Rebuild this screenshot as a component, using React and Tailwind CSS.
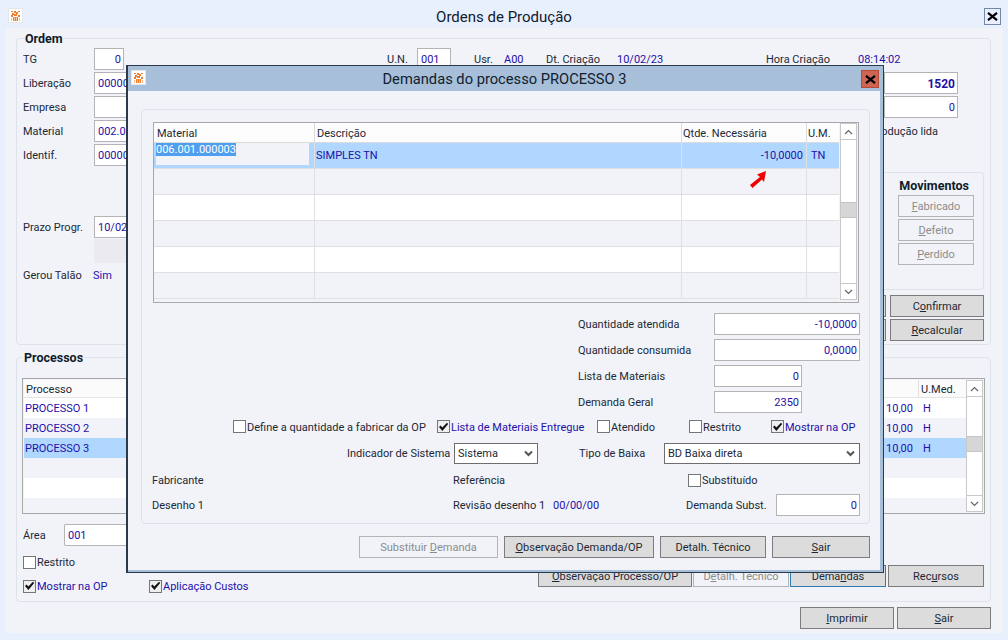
const blue = "text-[#1f10a8]";

function Logo() {
  return (
    <div className="w-[15px] h-[15px] bg-white border border-[#e6e6e6] flex items-center justify-center shrink-0">
      <svg width="9" height="10" viewBox="0 0 9 10">
        <path d="M0 0h2v1H0zM3 0h2v2H3zM7 0h2v1H7zM1 2h2v2H1zM5 1h2v2H5zM3 3h3v2H3zM0 4h2v2H0zM7 4h2v2H7zM2 6h1v4H2zM4 6h1v4H4zM6 6h1v4H6z" fill="#f47a2c" />
        <path d="M0 7h1v3H0zM8 7h1v3H8zM3 6h1v4H3zM5 6h1v4H5z" fill="#fab98a" />
      </svg>
    </div>
  );
}

function CloseX() {
  return (
    <svg width="11" height="9" viewBox="0 0 11 9">
      <path d="M1 0.8 L10 8.2 M10 0.8 L1 8.2" stroke="#000" strokeWidth="2.2" fill="none" />
    </svg>
  );
}

function Field({ children, className = "", color = blue }) {
  return (
    <div className={`h-[22px] bg-white border border-[#b4b4b4] pl-[3px] pr-[2px] flex items-center shrink-0 overflow-hidden whitespace-nowrap ${color} ${className}`}>
      <span>{children}</span>
    </div>
  );
}

function Btn({ children, className = "", disabled, active }) {
  let look = "bg-[#dcdcdc] border-[#7c7c7c] text-[#1c2836]";
  if (disabled) look = "bg-[#f1f3f9] border-[#b4b4b4] text-[#8c8c8c]";
  if (active) look = "bg-[#dcdcdc] border-[#2c7db5] text-[#1c2836]";
  return (
    <div className={`h-[22px] border flex items-center justify-center shrink-0 whitespace-nowrap ${look} ${className}`}>
      <span>{children}</span>
    </div>
  );
}

function Check({ label, checked, className = "", color = "text-[#1c2836]" }) {
  return (
    <div className={`flex items-center gap-[1px] shrink-0 whitespace-nowrap ${color} ${className}`}>
      <div className={`w-[13px] h-[13px] shrink-0 border border-[#767676] flex items-center justify-center ${checked ? "bg-[#efefef]" : "bg-white"}`}>
        {checked && (
          <svg width="11" height="10" viewBox="0 0 11 10">
            <path d="M1 5 L2.6 3.6 L4.3 5.6 L9 0.8 L10.2 2 L4.4 9 Z" fill="#111" />
          </svg>
        )}
      </div>
      <span>{label}</span>
    </div>
  );
}

function Select({ value, className = "" }) {
  return (
    <div className={`h-[21px] bg-white border border-[#6e6e6e] pl-[3px] pr-[4px] flex items-center justify-between shrink-0 text-[#1c2836] ${className}`}>
      <span>{value}</span>
      <svg width="9" height="7" viewBox="0 0 9 7">
        <path d="M1 1.5 L4.5 5 L8 1.5" stroke="#555" strokeWidth="2" fill="none" />
      </svg>
    </div>
  );
}

function Scrollbar({ className = "", thumbClass = "" }) {
  return (
    <div className={`w-[17px] shrink-0 bg-white border border-[#c8c8c8] flex flex-col justify-between relative ${className}`}>
      <div className="h-[16px] border-b border-[#c8c8c8] flex items-center justify-center">
        <svg width="9" height="6" viewBox="0 0 9 6"><path d="M1 5 L4.5 1.5 L8 5" stroke="#666" strokeWidth="1.2" fill="none" /></svg>
      </div>
      <div className={`absolute left-0 w-full h-[16px] bg-[#d6d6d6] border-y border-[#c4c4c4] ${thumbClass}`} />
      <div className="h-[16px] border-t border-[#c8c8c8] flex items-center justify-center">
        <svg width="9" height="6" viewBox="0 0 9 6"><path d="M1 1 L4.5 4.5 L8 1" stroke="#666" strokeWidth="1.2" fill="none" /></svg>
      </div>
    </div>
  );
}

function Group({ title, className = "", children, titleClass = "left-[7px]" }) {
  return (
    <div className={`relative border border-[#dde3ea] rounded-[4px] ${className}`}>
      {title && <div className={`absolute -top-[7px] bg-[#f1f3f9] px-[1px] font-bold text-[12.5px] text-[#0f1b2a] leading-[14px] ${titleClass}`}>{title}</div>}
      {children}
    </div>
  );
}

// campos da esquerda ficam cortados pelo modal
function LeftRow({ label, value, className = "" }) {
  return (
    <div className={`h-[24px] flex items-center ${className}`}>
      <span className="w-[71px] shrink-0">{label}</span>
      <Field className="w-[32px] border-r-0 pr-0">{value}</Field>
    </div>
  );
}

const demandRows = [0, 1, 2, 3, 4, 5];
const procRows = [
  { name: "PROCESSO 1", bg: "bg-white", h: "h-[20px]", hours: "10,00", um: "H" },
  { name: "PROCESSO 2", bg: "bg-[#f1f3f9]", h: "h-[20px]", hours: "10,00", um: "H" },
  { name: "PROCESSO 3", bg: "bg-[#b0d7ff]", h: "h-[20px]", hours: "10,00", um: "H" },
  { name: "", bg: "bg-[#f1f3f9]", h: "h-[20px]" },
  { name: "", bg: "bg-white", h: "h-[20px]" },
  { name: "", bg: "bg-[#f1f3f9]", h: "h-[14px]" },
];

function DemandasModal() {
  return (
    <div className="absolute left-[126px] top-[65px] w-[758px] h-[508px] border border-[#2b3a4a] border-l-2 bg-[#f1f3f9] flex flex-col">
      <div className="h-[25px] shrink-0 bg-[#a7bfd9] relative flex items-center justify-center text-[14.7px] text-[#10202f]">
        <div className="absolute left-[3px] top-[4px]"><Logo /></div>
        <div className="-ml-[2px] mt-[1px]">Demandas do processo PROCESSO 3</div>
        <div className="absolute right-[4px] top-[4px] w-[18px] h-[18px] bg-[#cd6552] border border-[#b5493a] flex items-center justify-center">
          <CloseX />
        </div>
      </div>
      <div className="flex-1 border-r-[3px] border-b-[2px] border-[#a7bfd9] pl-[13px] pr-[10px] pt-[18px]">
        <Group className="h-[415px] pl-[11px] pt-[12px]">
          <div className="w-[706px] h-[181px] border border-[#a8a8a8] bg-[#f1f3f9] flex overflow-hidden">
            <div className="w-[685px] shrink-0">
              <div className="h-[20px] flex bg-[#fdfdfd] border-b border-[#dcdcdc] text-[#1c2836]">
                <div className="w-[161px] pl-[3px] border-r border-[#dcdcdc] flex items-center"><span>Material</span></div>
                <div className="w-[367px] pl-[2px] border-r border-[#dcdcdc] flex items-center"><span>Descrição</span></div>
                <div className="w-[125px] pl-[1px] border-r border-[#dcdcdc] flex items-center"><span>Qtde. Necessária</span></div>
                <div className="w-[32px] pl-[1px] flex items-center"><span>U.M.</span></div>
              </div>
              {demandRows.map((i) => (
                <div key={i} className={`h-[26px] flex border-b border-[#e0e0e0] ${i === 0 ? "bg-[#b0d7ff]" : i % 2 === 1 ? "bg-[#f1f3f9]" : "bg-white"}`}>
                  <div className="w-[161px] border-r border-[#e0e0e0] pl-[2px]">
                    {i === 0 && (
                      <div className="w-[153px] h-[22px] bg-[#f1f3f9]">
                        <div className="w-fit bg-[#4f9ff0] text-white leading-[13px]">006.001.000003</div>
                      </div>
                    )}
                  </div>
                  <div className={`w-[367px] border-r border-[#e0e0e0] pl-[1px] flex items-center ${blue}`}>{i === 0 && "SIMPLES TN"}</div>
                  <div className={`w-[125px] border-r border-[#e0e0e0] pr-[3px] flex items-center justify-end ${blue}`}>{i === 0 && "-10,0000"}</div>
                  <div className={`w-[32px] pl-[4px] flex items-center ${blue}`}>{i === 0 && "TN"}</div>
                </div>
              ))}
            </div>
            <Scrollbar className="ml-[1px] mb-[2px]" thumbClass="top-[78px]" />
          </div>

          <div className="mt-[10px] flex flex-col gap-[4px]">
            <div className="flex items-center">
              <span className="ml-[425px] w-[136px]">Quantidade atendida</span>
              <Field className="w-[146px] justify-end">-10,0000</Field>
            </div>
            <div className="flex items-center">
              <span className="ml-[425px] w-[136px]">Quantidade consumida</span>
              <Field className="w-[146px] justify-end">0,0000</Field>
            </div>
            <div className="flex items-center">
              <span className="ml-[425px] w-[136px]">Lista de Materiais</span>
              <Field className="w-[88px] justify-end">0</Field>
            </div>
            <div className="flex items-center">
              <span className="ml-[425px] w-[136px]">Demanda Geral</span>
              <Field className="w-[88px] justify-end">2350</Field>
            </div>
          </div>

          <div className="h-[27px] flex items-center">
            <Check className="ml-[80px] w-[204px]" label="Define a quantidade a fabricar da OP" />
            <Check className="w-[160px]" checked color={blue} label="Lista de Materiais Entregue" />
            <Check className="w-[92px]" label="Atendido" />
            <Check className="w-[82px]" label="Restrito" />
            <Check checked color={blue} label="Mostrar na OP" />
          </div>

          <div className="h-[26px] flex items-center">
            <span className="ml-[194px] w-[107px] whitespace-nowrap">Indicador de Sistema</span>
            <Select className="w-[84px]" value="Sistema" />
            <span className="ml-[41px] w-[85px]">Tipo de Baixa</span>
            <Select className="w-[196px]" value="BD Baixa direta" />
          </div>

          <div className="h-[28px] flex items-center">
            <span className="-ml-[1px] w-[301px]">Fabricante</span>
            <span className="w-[235px]">Referência</span>
            <Check label="Substituído" />
          </div>

          <div className="h-[22px] flex items-center">
            <span className="-ml-[1px] w-[301px]">Desenho 1</span>
            <span className="w-[100px] whitespace-nowrap">Revisão desenho 1</span>
            <span className={`w-[133px] ${blue}`}>00/00/00</span>
            <span className="w-[90px] whitespace-nowrap">Demanda Subst.</span>
            <Field className="w-[84px] justify-end">0</Field>
          </div>
        </Group>

        <div className="mt-[12px] flex justify-end gap-[6px]">
          <Btn disabled className="w-[139px]">Substituir <u>D</u>emanda</Btn>
          <Btn className="w-[150px]"><u>O</u>bservação Demanda/OP</Btn>
          <Btn className="w-[106px]">Detalh. Técnico</Btn>
          <Btn className="w-[98px]"><u>S</u>air</Btn>
        </div>
      </div>
    </div>
  );
}

export default function App() {
  return (
    <div className="relative w-[1008px] h-[640px] overflow-hidden bg-[#e8effd] text-[11px] text-[#1c2836] font-['Roboto',sans-serif] leading-[14px] [&_span]:pt-[2px]">
      <div className="h-[28px] relative flex items-center justify-center text-[15px] text-[#10202f]">
        <div className="absolute left-[8px] top-[8px]"><Logo /></div>
        <div className="pt-[6px]">Ordens de Produção</div>
        <div className="absolute left-[984px] top-[8px] w-[17px] h-[17px] border border-[#7487a8] flex items-center justify-center">
          <CloseX />
        </div>
      </div>

      <div className="ml-[6px] mr-[5px] h-[605px] bg-[#f1f3f9] pl-[10px] pr-[12px] pt-[10px]">
        <Group title="Ordem" className="h-[307px] px-[6px] pt-[8px]">
          <div className="h-[24px] flex items-center">
            <span className="w-[71px]">TG</span>
            <Field className="w-[30px] justify-end">0</Field>
            <span className="ml-[263px] w-[30px]">U.N.</span>
            <Field className="w-[34px]">001</Field>
            <span className="ml-[23px] w-[30px]">Usr.</span>
            <span className={`w-[42px] ${blue}`}>A00</span>
            <span className="w-[71px]">Dt. Criação</span>
            <span className={`w-[149px] ${blue}`}>10/02/23</span>
            <span className="w-[92px]">Hora Criação</span>
            <span className={blue}>08:14:02</span>
          </div>
          <div className="flex justify-between">
            <div>
              <LeftRow label="Liberação" value="00000" />
              <LeftRow label="Empresa" value="" />
              <LeftRow label="Material" value="002.00" />
              <LeftRow label="Identif." value="00000" />
              <LeftRow className="mt-[48px]" label="Prazo Progr." value="10/02/" />
              <div className="ml-[71px] w-[32px] h-[24px] bg-[#ebebef]" />
              <div className="h-[24px] flex items-center">
                <span className="w-[70px]">Gerou Talão</span>
                <span className={blue}>Sim</span>
              </div>
            </div>
            <div className="w-[100px] flex flex-col items-end">
              <div className="h-[24px] flex items-center mr-[26px]">
                <Field className="w-[74px] justify-end font-bold text-[12px]">1520</Field>
              </div>
              <div className="h-[24px] flex items-center mr-[26px]">
                <Field className="w-[74px] justify-end">0</Field>
              </div>
              <div className="h-[24px] flex items-center mr-[46px] whitespace-nowrap">
                <span>odução lida</span>
              </div>
              <Group className="mt-[29px] w-[100px] h-[118px] flex flex-col items-end pr-[9px] pt-[6px] border-l-0 rounded-l-none">
                <div className="font-bold text-[12.5px] text-[#0f1b2a] mr-[5px] h-[16px]">Movimentos</div>
                <div className="flex flex-col gap-[2px]">
                  <Btn disabled className="w-[76px]"><u>F</u>abricado</Btn>
                  <Btn disabled className="w-[76px]"><u>D</u>efeito</Btn>
                  <Btn disabled className="w-[76px]"><u>P</u>erdido</Btn>
                </div>
              </Group>
              <div className="mt-[5px] flex flex-col gap-[2px]">
                <div className="flex gap-[4px]">
                  <Btn className="w-[2px] border-l-0" />
                  <Btn className="w-[94px]">C<u>o</u>nfirmar</Btn>
                </div>
                <div className="flex gap-[4px]">
                  <Btn className="w-[2px] border-l-0" />
                  <Btn className="w-[94px]"><u>R</u>ecalcular</Btn>
                </div>
              </div>
            </div>
          </div>
        </Group>

        <Group title="Processos" titleClass="left-[6px]" className="mt-[12px] h-[245px] px-[5px] pt-[20px]">
          <div className="w-[963px] h-[136px] border border-[#a8a8a8] p-[1px] flex">
            <div className="flex-1">
              <div className="h-[18px] flex bg-[#fbfbfb] border-b border-[#e4e4e4]">
                <span className="flex-1 pl-[2px] flex items-center">Processo</span>
                <span className="w-[48px] pl-[2px] flex items-center border-l border-[#e0e0e0]">U.Med.</span>
              </div>
              {procRows.map((r, i) => (
                <div key={i} className={`flex ${r.h} ${r.bg} ${blue}`}>
                  <span className="flex-1 pl-[1px] flex items-center">{r.name}</span>
                  <span className="w-[40px] pr-[6px] flex items-center justify-end">{r.hours}</span>
                  <span className="w-[47px] pl-[4px] flex items-center">{r.um}</span>
                </div>
              ))}
            </div>
            <Scrollbar thumbClass="top-[55px]" />
          </div>
          <div className="flex justify-between">
            <div className="pl-[1px]">
              <div className="h-[28px] mt-[7px] flex items-center">
                <span className="w-[41px]">Área</span>
                <Field className="w-[62px] h-[20px] rounded-l-[2px] border-r-0">001</Field>
              </div>
              <div className="h-[24px] mt-[1px] flex items-center">
                <Check label="Restrito" />
              </div>
              <div className="h-[24px] flex items-center">
                <Check className="w-[126px]" checked color={blue} label="Mostrar na OP" />
                <Check checked color={blue} label="Aplicação Custos" />
              </div>
            </div>
            <div className="flex gap-[1px] mt-[51px] mr-[1px]">
              <Btn className="w-[154px]"><u>O</u>bservação Processo/OP</Btn>
              <Btn disabled className="w-[96px]">D<u>e</u>talh. Técnico</Btn>
              <Btn active className="w-[96px]">Dema<u>n</u>das</Btn>
              <Btn className="w-[96px] ml-[1px]">Rec<u>u</u>rsos</Btn>
            </div>
          </div>
        </Group>

        <div className="mt-[5px] flex justify-end gap-[3px]">
          <Btn className="w-[94px]"><u>I</u>mprimir</Btn>
          <Btn className="w-[94px]"><u>S</u>air</Btn>
        </div>
      </div>

      <DemandasModal />

      <svg className="absolute left-[749px] top-[170px]" width="18" height="19" viewBox="0 0 18 19">
        <path d="M17 1 L8 4.5 L11 7 L1 15 L3.5 18 L13 9.5 L15 12 Z" fill="#f00000" />
      </svg>
    </div>
  );
}
